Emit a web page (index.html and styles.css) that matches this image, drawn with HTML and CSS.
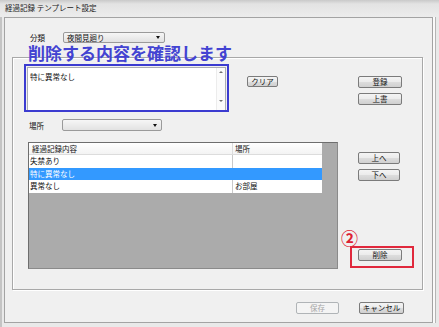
FILE: index.html
```html
<!DOCTYPE html>
<html lang="ja">
<head>
<meta charset="utf-8">
<title>経過記録 テンプレート設定</title>
<link rel="stylesheet" href="styles.css">
</head>
<body>
<div class="window">
  <div class="titlebar">経過記録 テンプレート設定</div>
  <div class="client">
    <div class="top-row">
      <span class="label">分類</span>
      <div class="combo"><span>夜間見廻り</span><i class="arrow"></i></div>
    </div>
    <div class="groupbox">
      <div class="left-col">
        <div class="row-a">
          <div class="textarea">
            <div class="ta-text">特に異常なし</div>
            <div class="ta-scroll"><i class="up"></i><i class="down"></i></div>
          </div>
          <div class="btn btn-clear">クリア</div>
        </div>
        <div class="row-b">
          <span class="label label-place">場所</span>
          <div class="combo combo-place"><span></span><i class="arrow"></i></div>
        </div>
        <div class="grid">
          <div class="grid-rows">
            <div class="grid-row header"><div class="c1">経過記録内容</div><div class="c2">場所</div></div>
            <div class="grid-row"><div class="c1">失禁あり</div><div class="c2"></div></div>
            <div class="grid-row selected"><div class="c1">特に異常なし</div><div class="c2"></div></div>
            <div class="grid-row"><div class="c1">異常なし</div><div class="c2">お部屋</div></div>
          </div>
        </div>
      </div>
      <div class="right-col">
        <div class="btn btn-reg">登録</div>
        <div class="btn btn-over">上書</div>
        <div class="btn btn-up">上へ</div>
        <div class="btn btn-down">下へ</div>
        <div class="btn btn-del">削除</div>
      </div>
    </div>
    <div class="bottom-row">
      <div class="btn btn-save disabled">保存</div>
      <div class="btn btn-cancel">キャンセル</div>
    </div>
  </div>

  <div class="note">削除する内容を確認します</div>
  <div class="hl-blue"></div>
  <div class="step">②</div>
  <div class="hl-red"></div>
</div>
</body>
</html>
```

FILE: styles.css
```css
* { box-sizing: border-box; }
html, body { margin: 0; padding: 0; }
body {
  font-family: "Noto Sans CJK JP", "Noto Sans", sans-serif;
  font-size: 7.5px;
  color: #111;
  background: #e9e9e9;
}
.window {
  position: relative;
  width: 439px;
  height: 327px;
  background: #e9e9e9;
  overflow: hidden;
  box-shadow: inset 2px 0 0 #c4c4c4;
}
.titlebar {
  height: 17px;
  line-height: 15px;
  padding-left: 5px;
  font-size: 7.5px;
  color: #1a1a1a;
  background: linear-gradient(#c9c9c9 0, #e3e3e3 4px, #ececec 100%);
}
.client {
  margin-left: 4px;
  width: 429px;
  height: 306px;
  border: 1px solid #a3a3a3;
  background: #f0f0f0;
  box-shadow: 2px 0 0 #fafafa, 3px 0 0 #b5b5b5;
}
.top-row {
  display: flex;
  align-items: center;
  height: 11px;
  margin: 14px 0 0 25px;
}
.label { width: 33px; line-height: 11px; }
.combo {
  position: relative;
  width: 102px;
  height: 11px;
  border: 1px solid #9a9a9a;
  border-radius: 2px;
  background: linear-gradient(#f6f6f6, #e2e2e2);
  line-height: 9px;
  padding-left: 3px;
}
.arrow {
  position: absolute;
  right: 4px;
  top: 3px;
  width: 0;
  height: 0;
  border-left: 2.5px solid transparent;
  border-right: 2.5px solid transparent;
  border-top: 3px solid #111;
}
.groupbox {
  margin: 14px 0 0 7px;
  width: 411px;
  height: 233px;
  border: 1px solid #a8a8a8;
  box-shadow: inset 1px 1px 0 #fff, 1px 1px 0 #fff;
  padding: 9px 0 0 14px;
  display: grid;
  grid-template-columns: 311px 44px;
  column-gap: 20px;
  align-items: start;
}
.row-a { display: flex; align-items: flex-start; }
.textarea {
  position: relative;
  width: 199px;
  height: 44px;
  background: #fff;
  border: 1px solid #abadb3;
}
.ta-text { padding: 3px 0 0 2px; line-height: 12px; }
.ta-scroll {
  position: absolute;
  right: 0;
  top: 0;
  bottom: 0;
  width: 9px;
  border-left: 1px solid #ececec;
  background: #fbfbfb;
}
.ta-scroll i {
  position: absolute;
  left: 2px;
  width: 0;
  height: 0;
  border-left: 2px solid transparent;
  border-right: 2px solid transparent;
}
.ta-scroll .up { top: 3px; border-bottom: 2px solid #707070; }
.ta-scroll .down { bottom: 8px; border-top: 2px solid #707070; }
.btn {
  height: 12px;
  border: 1px solid #7b7b7b;
  border-radius: 2px;
  background: linear-gradient(#f4f4f4 0%, #ebebeb 50%, #dddddd 51%, #d0d0d0 100%);
  text-align: center;
  line-height: 10px;
  font-size: 7.5px;
  color: #111;
}
.btn.disabled {
  border-color: #b0b4b7;
  background: #f4f4f4;
  color: #a6a6a6;
}
.btn-clear { width: 31px; margin: 9px 0 0 21px; height: 11px; line-height: 9px; }
.row-b { display: flex; align-items: center; margin-top: 8px; height: 12px; }
.label-place { width: 35px; padding-left: 2px; }
.combo-place { width: 100px; height: 12px; }
.combo-place .arrow { top: 4px; }
.grid {
  margin: 11px 0 0 1px;
  width: 310px;
  height: 127px;
  background: #ababab;
  border: 1px solid #6e6e6e;
  border-right-color: #8a8a8a;
  border-bottom-color: #8a8a8a;
}
.grid-rows { width: 293px; }
.grid-row {
  display: flex;
  height: 12.5px;
  line-height: 12.5px;
  background: #fff;
}
.grid-row .c1 { width: 203px; padding-left: 1px; }
.grid-row .c2 { width: 90px; padding-left: 2px; border-left: 1px solid #c9c9c9; }
.grid-row.header {
  height: 12px;
  line-height: 11px;
  background: linear-gradient(#ffffff, #f3f3f3);
  border-bottom: 1px solid #dcdcdc;
}
.grid-row.header .c1 { padding-left: 3px; }
.grid-row.header .c2 { border-left-color: #dcdcdc; }
.grid-row.selected { background: #3399ff; color: #fff; }
.grid-row.selected .c2 { border-left-color: #3399ff; }
.right-col { display: flex; flex-direction: column; }
.btn-reg { margin-top: 9px; }
.btn-over { margin-top: 5px; }
.btn-up { margin-top: 47px; width: 42px; }
.btn-down { margin-top: 5px; width: 42px; }
.btn-del { margin-top: 68px; }
.bottom-row {
  display: flex;
  justify-content: flex-end;
  gap: 20px;
  margin-top: 12px;
  padding-right: 28px;
}
.btn-save { width: 43px; }
.btn-cancel { width: 45px; }

/* annotations laid over the dialog */
.note {
  position: absolute;
  left: 28px;
  top: 44px;
  font-size: 17px;
  line-height: 17px;
  font-weight: bold;
  color: #4343d2;
  white-space: nowrap;
}
.hl-blue {
  position: absolute;
  left: 24px;
  top: 64px;
  width: 205px;
  height: 48px;
  border: 2px solid #3b3bd0;
}
.step {
  position: absolute;
  left: 341px;
  top: 229px;
  font-size: 17px;
  line-height: 17px;
  font-weight: bold;
  color: #dd2233;
}
.hl-red {
  position: absolute;
  left: 350px;
  top: 246px;
  width: 64px;
  height: 22px;
  border: 2px solid #e0283c;
}
```
